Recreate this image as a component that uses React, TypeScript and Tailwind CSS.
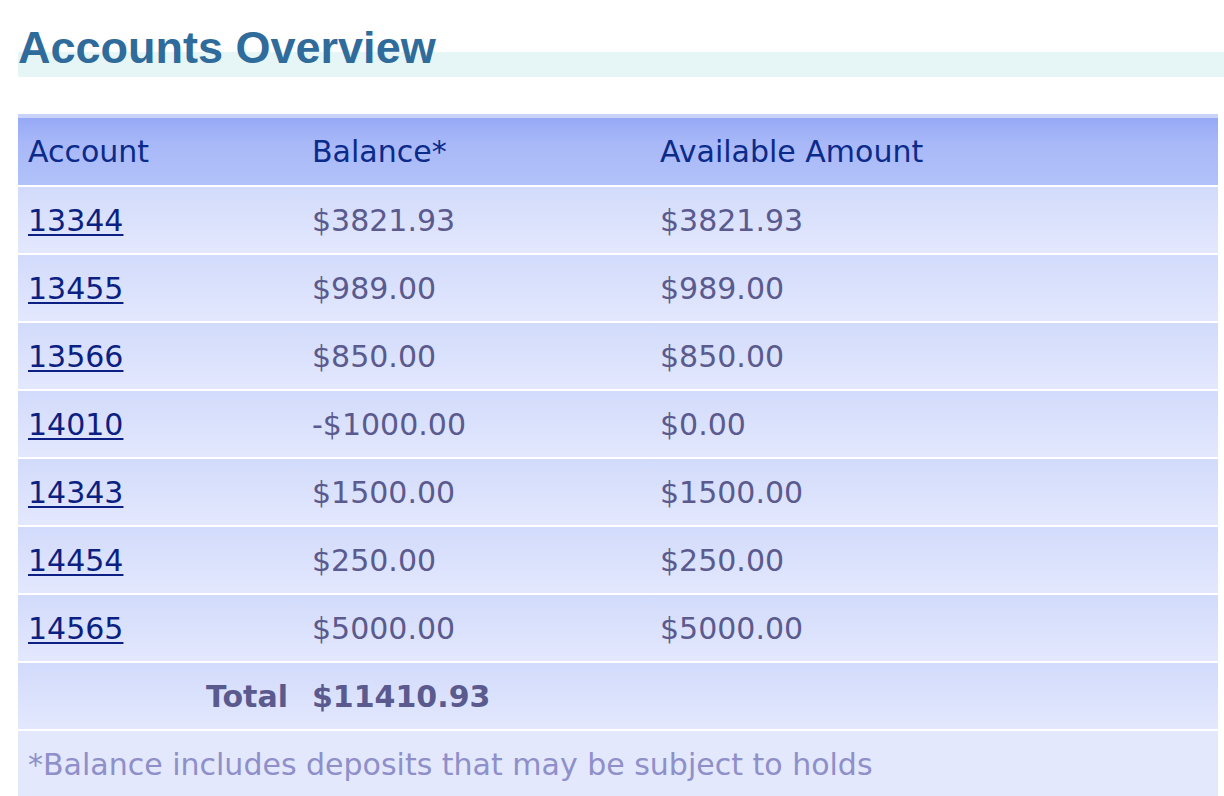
import React from 'react';

interface Account {
  id: string;
  balance: string;
  available: string;
}

const accounts: Account[] = [
  { id: '13344', balance: '$3821.93', available: '$3821.93' },
  { id: '13455', balance: '$989.00', available: '$989.00' },
  { id: '13566', balance: '$850.00', available: '$850.00' },
  { id: '14010', balance: '-$1000.00', available: '$0.00' },
  { id: '14343', balance: '$1500.00', available: '$1500.00' },
  { id: '14454', balance: '$250.00', available: '$250.00' },
  { id: '14565', balance: '$5000.00', available: '$5000.00' },
];

const rowBg = 'bg-[linear-gradient(to_bottom,#d2dbfb,#e3e8fd)]';
const headBg = 'bg-[linear-gradient(to_bottom,#96a9f5,#a9b9f8_40%,#b1c1f9)]';

export default function App() {
  return (
    <div className="min-h-screen bg-white pl-[18px] pr-[6px] font-['DejaVu_Sans',sans-serif]">
      <h1 className="-mr-[6px] pt-[23px] pb-[4px] text-[45px] leading-[50px] font-bold text-[#2f6b9b] font-['Liberation_Sans',Arial,sans-serif] bg-[linear-gradient(to_bottom,transparent_52px,#e6f6f6_52px)]">
        Accounts Overview
      </h1>

      <table className="mt-[37px] w-full border-collapse text-[30px]">
        <thead>
          <tr className="border-t-4 border-[#c9d3f9]">
            <th className={`h-[70px] w-[284px] px-[10px] text-left font-normal text-[#0b2a8a] ${headBg}`}>
              Account
            </th>
            <th className={`h-[70px] w-[348px] px-[10px] text-left font-normal text-[#0b2a8a] ${headBg}`}>
              Balance*
            </th>
            <th className={`h-[70px] px-[10px] text-left font-normal text-[#0b2a8a] ${headBg}`}>
              Available Amount
            </th>
          </tr>
        </thead>
        <tbody>
          {accounts.map((acc) => (
            <tr key={acc.id} className="border-t-2 border-white">
              <td className={`h-[68px] px-[10px] ${rowBg}`}>
                <a href="#" className="text-[#0c1f82] underline decoration-2 underline-offset-[3px]">
                  {acc.id}
                </a>
              </td>
              <td className={`h-[68px] px-[10px] text-[#5b5a8f] ${rowBg}`}>{acc.balance}</td>
              <td className={`h-[68px] px-[10px] text-[#5b5a8f] ${rowBg}`}>{acc.available}</td>
            </tr>
          ))}
          <tr className="border-t-2 border-white">
            <td className={`h-[68px] pl-[10px] pr-[14px] text-right font-bold text-[#5b5a8f] ${rowBg}`}>Total</td>
            <td className={`h-[68px] px-[10px] font-bold text-[#5b5a8f] ${rowBg}`}>$11410.93</td>
            <td className={`h-[68px] px-[10px] ${rowBg}`}></td>
          </tr>
          <tr className="border-t-2 border-white">
            <td colSpan={3} className="h-[68px] px-[10px] text-[#8f8fc9] bg-[#e3e8fd]">
              *Balance includes deposits that may be subject to holds
            </td>
          </tr>
        </tbody>
      </table>
    </div>
  );
}
